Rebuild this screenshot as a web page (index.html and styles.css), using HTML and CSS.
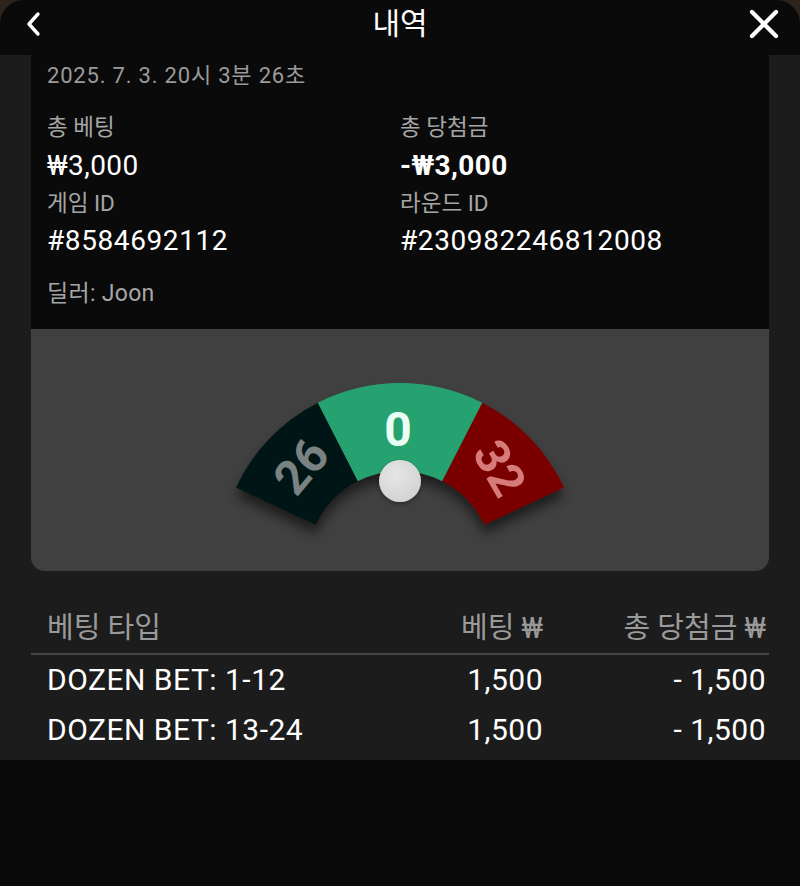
FILE: index.html
```html
<!DOCTYPE html>
<html lang="ko">
<head>
<meta charset="utf-8">
<title>내역</title>
<link rel="stylesheet" href="styles.css">
</head>
<body>
<div class="frame">
  <header class="topbar">
    <button class="icon-btn back" aria-label="뒤로">
      <svg width="20" height="28" viewBox="0 0 20 28"><path d="M14 4 L5 14 L14 24" fill="none" stroke="#fff" stroke-width="3.4" stroke-linecap="round" stroke-linejoin="round"/></svg>
    </button>
    <h1 class="title">내역</h1>
    <button class="icon-btn close" aria-label="닫기">
      <svg width="32" height="32" viewBox="0 0 32 32"><path d="M4 4 L28 28 M28 4 L4 28" fill="none" stroke="#fff" stroke-width="4.2" stroke-linecap="round"/></svg>
    </button>
  </header>
</div>

<main class="panel">
  <section class="info-card">
    <div class="date">2025. 7. 3. 20시 3분 26초</div>
    <div class="info-grid">
      <div class="label">총 베팅</div>
      <div class="label">총 당첨금</div>
      <div class="value">₩3,000</div>
      <div class="value strong">-₩3,000</div>
      <div class="label small">게임 ID</div>
      <div class="label small">라운드 ID</div>
      <div class="value id">#8584692112</div>
      <div class="value id">#230982246812008</div>
    </div>
    <div class="dealer">딜러: Joon</div>
  </section>

  <section class="wheel-box">
    <svg class="wheel" width="738" height="242" viewBox="0 0 738 242">
      <defs>
        <filter id="segShadow" x="-20%" y="-20%" width="140%" height="160%">
          <feDropShadow dx="0" dy="9" stdDeviation="6" flood-color="#000" flood-opacity="0.55"/>
        </filter>
        <filter id="ballShadow" x="-50%" y="-50%" width="200%" height="200%">
          <feDropShadow dx="0" dy="2" stdDeviation="2" flood-color="#000" flood-opacity="0.35"/>
        </filter>
        <radialGradient id="ballFill" cx="40%" cy="35%" r="70%">
          <stop offset="0" stop-color="#e6e6e6"/>
          <stop offset="1" stop-color="#d2d2d2"/>
        </radialGradient>
      </defs>
      <!-- pocket segments around centre (369,235): outer r 181, inner r 93 -->
      <g filter="url(#segShadow)">
        <path d="M205.0 158.5 A181 181 0 0 1 286.8 73.7 L326.8 152.1 A93 93 0 0 0 284.7 195.7 Z" fill="#031412"/>
        <path d="M451.2 73.7 A181 181 0 0 1 533.0 158.5 L453.3 195.7 A93 93 0 0 0 411.2 152.1 Z" fill="#7a0002"/>
        <path d="M286.8 73.7 A181 181 0 0 1 451.2 73.7 L411.2 152.1 A93 93 0 0 0 326.8 152.1 Z" fill="#28a26f"/>
      </g>
      <text class="num zero" x="367" y="117" text-anchor="middle">0</text>
      <text class="num black" x="0" y="17" text-anchor="middle" transform="translate(270 137) rotate(-50)">26</text>
      <text class="num red" x="0" y="17" text-anchor="middle" transform="translate(469 139) rotate(60)">32</text>
      <circle cx="369" cy="152" r="21" fill="url(#ballFill)" filter="url(#ballShadow)"/>
    </svg>
  </section>

  <section class="bets">
    <div class="bets-row head">
      <div>베팅 타입</div>
      <div class="num-col">베팅 ₩</div>
      <div class="num-col">총 당첨금 ₩</div>
    </div>
    <div class="bets-row">
      <div>DOZEN BET: 1-12</div>
      <div class="num-col">1,500</div>
      <div class="num-col">- 1,500</div>
    </div>
    <div class="bets-row">
      <div>DOZEN BET: 13-24</div>
      <div class="num-col">1,500</div>
      <div class="num-col">- 1,500</div>
    </div>
  </section>
</main>
</body>
</html>
```

FILE: styles.css
```css
* {
  box-sizing: border-box;
}

html, body {
  margin: 0;
  padding: 0;
}

body {
  background: #0a0a0a;
  color: #fff;
  font-family: "Roboto", "Noto Sans CJK KR", sans-serif;
  width: 800px;
  min-height: 886px;
}

/* dim backdrop peeking out behind the sheet's rounded top corners */
.frame {
  background: #2c231d;
}

.topbar {
  height: 55px;
  background: #0a0a0a;
  border-radius: 24px 24px 0 0;
  display: grid;
  grid-template-columns: 80px 1fr 80px;
  align-items: start;
}

.icon-btn {
  background: none;
  border: 0;
  padding: 0;
  display: flex;
  cursor: pointer;
}

.back {
  margin: 10px 0 0 24px;
}

.close {
  justify-self: end;
  margin: 8px 20px 0 0;
}

.title {
  margin: 0;
  padding-top: 2px;
  text-align: center;
  font-size: 30px;
  font-weight: 400;
  line-height: 38px;
  color: #fff;
  font-family: "Noto Sans CJK KR", sans-serif;
}

.panel {
  background: #1c1c1c;
  height: 705px;
  padding: 0 31px 6px;
}

.info-card {
  background: #0a0a0a;
  padding: 0 16px 20px;
}

.date {
  height: 42px;
  line-height: 42px;
  font-size: 22px;
  letter-spacing: 0.8px;
  color: #9a9a9a;
  margin-bottom: 15px;
}

.info-grid {
  display: grid;
  grid-template-columns: 353px 1fr;
}

.label {
  font-size: 22.5px;
  line-height: 30px;
  color: #a6a6a6;
}

.label.small {
  line-height: 26px;
}

.value {
  font-size: 28px;
  letter-spacing: 0.4px;
  line-height: 48px;
  color: #fff;
}

.value.strong {
  font-weight: 700;
}

.value.id {
  font-size: 28px;
  letter-spacing: 0.6px;
  line-height: 50px;
}

.dealer {
  margin-top: 13px;
  font-size: 23px;
  letter-spacing: 0.3px;
  line-height: 30px;
  color: #a6a6a6;
}

.wheel-box {
  height: 242px;
  background: #404040;
  border-radius: 0 0 14px 14px;
  overflow: hidden;
}

.wheel {
  display: block;
}

.num {
  font-family: "Roboto", sans-serif;
  font-weight: 700;
  font-size: 48px;
}

.num.zero {
  fill: #eafff4;
}

.num.black {
  fill: #7b8382;
}

.num.red {
  fill: #d77a7a;
}

.bets {
  margin-top: 32px;
}

.bets-row {
  display: grid;
  grid-template-columns: 1fr 180px 223px;
  padding: 0 3px 0 16px;
  font-size: 30px;
  letter-spacing: 0.5px;
  line-height: 50px;
  color: #fff;
}

.bets-row.head {
  font-size: 29px;
  letter-spacing: 0;
  color: #9a9a9a;
  border-bottom: 2px solid #454545;
}

.num-col {
  text-align: right;
}
```
